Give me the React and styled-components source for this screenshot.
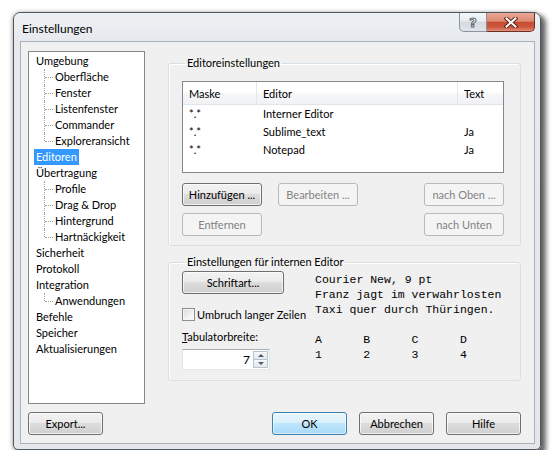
import React from 'react';
import styled, { createGlobalStyle, css } from 'styled-components';

const GlobalStyle = createGlobalStyle`
  html, body { margin: 0; padding: 0; background: #ffffff; }
  body {
    font-family: Lato, "Liberation Sans", sans-serif;
    font-size: 11px;
    color: #000;
  }
  * { box-sizing: border-box; }
`;

const Desk = styled.div`
  padding: 12px 0 0 13px;
`;

const Window = styled.div`
  width: 528px;
  height: 438px;
  display: flex;
  flex-direction: column;
  padding: 0 5px 5px 6px;
  border: 1px solid #4e565e;
  border-radius: 7px 7px 5px 5px;
  background: linear-gradient(#eef1f4, #e6eaee 28px, #e3e7eb);
  box-shadow: 4px 4px 5px 1px rgba(0, 0, 0, 0.6), -1px 0 4px rgba(0, 0, 0, 0.25);
`;

const TitleBar = styled.div`
  height: 28px;
  display: flex;
  align-items: center;
  padding-left: 2px;
`;

const Title = styled.span`
  font-size: 12px;
  padding-top: 2px;
  color: #000;
`;

const CaptionGroup = styled.div`
  display: flex;
  align-self: flex-start;
  margin-left: auto;
`;

const CaptionButton = styled.div`
  width: ${(p) => p.$w}px;
  height: 19px;
  display: flex;
  align-items: center;
  justify-content: center;
  border: 1px solid #8a949e;
  border-top: none;
  ${(p) =>
    p.$close
      ? css`
          border-color: #6f3024;
          border-left: none;
          border-radius: 0 0 5px 0;
          background: linear-gradient(#eaa898 0%, #dd8a76 45%, #c74d32 52%, #cc5a40 80%, #e2937d 100%);
        `
      : css`
          border-radius: 0 0 0 5px;
          background: linear-gradient(#f5f7f9 0%, #e8ecf0 45%, #d4dae0 52%, #dfe4e9 100%);
        `}
`;

const HelpGlyph = styled.span`
  font-family: "DejaVu Sans", sans-serif;
  font-size: 13px;
  font-weight: bold;
  color: #f4f6f8;
  -webkit-text-stroke: 1px #5e6874;
  line-height: 1;
`;

const Client = styled.div`
  flex: 1;
  display: grid;
  grid-template-columns: 117px 353px;
  grid-template-rows: 1fr auto;
  column-gap: 23px;
  row-gap: 8px;
  padding: 9px 13px 8px 7px;
  border: 1px solid #a9b1b9;
  background: #f0f0f0;
`;

/* ---------- navigation tree ---------- */

const Tree = styled.div`
  border: 1px solid #828790;
  background: #fff;
  padding-top: 1px;
`;

const TreeRow = styled.div`
  position: relative;
  height: 16px;
  line-height: 16px;
  white-space: nowrap;
  padding-left: ${(p) => (p.$level ? 26 : 7)}px;

  ${(p) =>
    p.$level > 0 &&
    css`
      &::before {
        content: '';
        position: absolute;
        left: 15px;
        top: 0;
        height: ${p.$last ? 8 : 16}px;
        border-left: 1px dotted #a0a0a0;
      }
      &::after {
        content: '';
        position: absolute;
        left: 16px;
        top: 8px;
        width: 8px;
        border-top: 1px dotted #a0a0a0;
      }
    `}
`;

const TreeLabel = styled.span`
  display: inline-block;
  padding: 0 2px;
  margin-left: -2px;
  ${(p) =>
    p.$selected &&
    css`
      background: #3399ff;
      color: #fff;
    `}
`;

/* ---------- group boxes ---------- */

const RightColumn = styled.div`
  display: flex;
  flex-direction: column;
  padding-top: 5px;
`;

const GroupBox = styled.fieldset`
  margin: ${(p) => p.$gap || 0}px 0 0 0;
  padding: ${(p) => p.$pt}px 16px ${(p) => p.$pb}px 13px;
  border: 1px solid #d5dfe5;
  border-radius: 3px;
  box-shadow: inset 1px 1px 0 #ffffff;
  min-width: 0;
`;

const Legend = styled.legend`
  margin-left: 3px;
  padding: 0 2px;
  line-height: 14px;
  color: #000;
`;

/* ---------- list view ---------- */

const ListView = styled.div`
  height: 92px;
  border: 1px solid #828790;
  background: #fff;
`;

const ListGrid = styled.div`
  display: grid;
  grid-template-columns: 74px 201px 1fr;
`;

const HeaderRow = styled(ListGrid)`
  height: 23px;
  border-bottom: 1px solid #e2e4e8;
  background: linear-gradient(#ffffff 0%, #ffffff 45%, #f6f7f9 55%, #f1f2f4 100%);
`;

const HeaderCell = styled.div`
  display: flex;
  align-items: center;
  padding-left: 6px;
  border-right: ${(p) => (p.$last ? 'none' : '1px solid #e3e6ea')};
`;

const ListRow = styled(ListGrid)`
  height: 18px;
  line-height: 18px;
`;

const ListCell = styled.div`
  padding-left: 6px;
  white-space: nowrap;
`;

/* ---------- buttons ---------- */

const ButtonRow = styled.div`
  display: flex;
  gap: 16px;
  margin-top: ${(p) => p.$mt}px;
`;

const Button = styled.button`
  width: ${(p) => p.$w || 80}px;
  height: 23px;
  padding: 0;
  font: inherit;
  color: #000;
  border: 1px solid #707070;
  border-radius: 3px;
  background: linear-gradient(#f2f2f2 0%, #ebebeb 45%, #dddddd 50%, #cfcfcf 100%);
  box-shadow: inset 0 0 0 1px rgba(255, 255, 255, 0.7);
  ${(p) => p.$push && css`margin-left: auto;`}
  ${(p) =>
    p.disabled &&
    css`
      color: #838383;
      border-color: #b6babd;
      background: #f4f4f4;
      box-shadow: none;
    `}
  ${(p) =>
    p.$default &&
    css`
      border-color: #3c7fb1;
      background: linear-gradient(#eaf6fd 0%, #d9f0fc 45%, #bee6fd 50%, #a7d9f5 100%);
      box-shadow: inset 0 0 0 1px rgba(255, 255, 255, 0.6);
    `}
`;

/* ---------- internal editor settings ---------- */

const EditorGrid = styled.div`
  display: grid;
  grid-template-columns: 133px auto;
`;

const EditorControls = styled.div`
  display: flex;
  flex-direction: column;
  align-items: flex-start;
`;

const CheckRow = styled.label`
  display: flex;
  align-items: center;
  gap: 2px;
  height: 16px;
  margin-top: 12px;
  white-space: nowrap;
`;

const CheckBox = styled.span`
  width: 13px;
  height: 13px;
  border: 1px solid #8e8f8f;
  background: linear-gradient(135deg, #dcdcdc, #ffffff);
  box-shadow: inset 0 0 0 1px #f4f4f4;
`;

const FieldLabel = styled.div`
  margin-top: 8px;
  line-height: 14px;
`;

const SpinEdit = styled.div`
  margin-top: 5px;
  width: 88px;
  height: 21px;
  display: flex;
  align-items: stretch;
  border: 1px solid #abadb3;
  border-color: #abadb3 #dbdfe6 #e3e9ef #e2e3ea;
  background: #fff;
  padding: 1px;
`;

const SpinValue = styled.div`
  flex: 1;
  display: flex;
  align-items: center;
  justify-content: flex-end;
  padding-right: 3px;
  font-size: 12px;
`;

const SpinButtons = styled.div`
  width: 15px;
  display: flex;
  flex-direction: column;
`;

const SpinHalf = styled.div`
  flex: 1;
  display: flex;
  align-items: center;
  justify-content: center;
  border: 1px solid #b7c3cf;
  ${(p) => p.$down && css`border-top: none;`}
  background: linear-gradient(#f6f8fa, #e3e8ee);
`;

const Arrow = styled.span`
  width: 0;
  height: 0;
  border-left: 3px solid transparent;
  border-right: 3px solid transparent;
  ${(p) =>
    p.$down
      ? css`border-top: 3px solid #4a5866;`
      : css`border-bottom: 3px solid #4a5866;`}
`;

const Preview = styled.pre`
  margin: 0;
  padding-top: 1px;
  font-family: "Liberation Mono", "Courier New", monospace;
  font-size: 11.5px;
  line-height: 15px;
  color: #000;
`;

const Footer = styled.div`
  grid-column: 1 / -1;
  display: flex;
  gap: 12px;
`;

const treeData = [
  { label: 'Umgebung', children: ['Oberfläche', 'Fenster', 'Listenfenster', 'Commander', 'Exploreransicht'] },
  { label: 'Editoren', selected: true },
  { label: 'Übertragung', children: ['Profile', 'Drag & Drop', 'Hintergrund', 'Hartnäckigkeit'] },
  { label: 'Sicherheit' },
  { label: 'Protokoll' },
  { label: 'Integration', children: ['Anwendungen'] },
  { label: 'Befehle' },
  { label: 'Speicher' },
  { label: 'Aktualisierungen' },
];

const treeRows = treeData.flatMap((node) => [
  { label: node.label, level: 0, selected: node.selected },
  ...(node.children || []).map((c, i, arr) => ({ label: c, level: 1, last: i === arr.length - 1 })),
]);

const editors = [
  { mask: '*.*', editor: 'Interner Editor', text: '' },
  { mask: '*.*', editor: 'Sublime_text', text: 'Ja' },
  { mask: '*.*', editor: 'Notepad', text: 'Ja' },
];

const previewText = [
  'Courier New, 9 pt',
  'Franz jagt im verwahrlosten',
  'Taxi quer durch Thüringen.',
  '',
  'A      B      C      D',
  '1      2      3      4',
].join('\n');

function CloseGlyph() {
  return (
    <svg width="14" height="11" viewBox="0 0 14 11">
      <path d="M2.5 1.5 L11.5 9.5 M11.5 1.5 L2.5 9.5" stroke="#5a2219" strokeWidth="4" strokeLinecap="square" />
      <path d="M2.5 1.5 L11.5 9.5 M11.5 1.5 L2.5 9.5" stroke="#ffffff" strokeWidth="2" strokeLinecap="square" />
    </svg>
  );
}

export default function App() {
  return (
    <>
      <GlobalStyle />
      <Desk>
        <Window>
          <TitleBar>
            <Title>Einstellungen</Title>
            <CaptionGroup>
              <CaptionButton $w={28}>
                <HelpGlyph>?</HelpGlyph>
              </CaptionButton>
              <CaptionButton $w={48} $close>
                <CloseGlyph />
              </CaptionButton>
            </CaptionGroup>
          </TitleBar>

          <Client>
            <Tree>
              {treeRows.map((r) => (
                <TreeRow key={r.label} $level={r.level} $last={r.last}>
                  <TreeLabel $selected={r.selected}>{r.label}</TreeLabel>
                </TreeRow>
              ))}
            </Tree>

            <RightColumn>
              <GroupBox $pt={11} $pb={9}>
                <Legend>Editoreinstellungen</Legend>
                <ListView>
                  <HeaderRow>
                    <HeaderCell>Maske</HeaderCell>
                    <HeaderCell>Editor</HeaderCell>
                    <HeaderCell $last>Text</HeaderCell>
                  </HeaderRow>
                  {editors.map((e) => (
                    <ListRow key={e.editor}>
                      <ListCell>{e.mask}</ListCell>
                      <ListCell>{e.editor}</ListCell>
                      <ListCell>{e.text}</ListCell>
                    </ListRow>
                  ))}
                </ListView>
                <ButtonRow $mt={10}>
                  <Button>Hinzufügen ...</Button>
                  <Button disabled>Bearbeiten ...</Button>
                  <Button disabled $push>nach Oben ...</Button>
                </ButtonRow>
                <ButtonRow $mt={7}>
                  <Button disabled>Entfernen</Button>
                  <Button disabled $push>nach Unten</Button>
                </ButtonRow>
              </GroupBox>

              <GroupBox $gap={9} $pt={2} $pb={10}>
                <Legend>Einstellungen für internen Editor</Legend>
                <EditorGrid>
                  <EditorControls>
                    <Button $w={102}>Schriftart...</Button>
                    <CheckRow>
                      <CheckBox />
                      Umbruch langer Zeilen
                    </CheckRow>
                    <FieldLabel>
                      <u>T</u>abulatorbreite:
                    </FieldLabel>
                    <SpinEdit>
                      <SpinValue>7</SpinValue>
                      <SpinButtons>
                        <SpinHalf>
                          <Arrow />
                        </SpinHalf>
                        <SpinHalf $down>
                          <Arrow $down />
                        </SpinHalf>
                      </SpinButtons>
                    </SpinEdit>
                  </EditorControls>
                  <Preview>{previewText}</Preview>
                </EditorGrid>
              </GroupBox>
            </RightColumn>

            <Footer>
              <Button $w={75}>Export...</Button>
              <Button $w={75} $default $push>OK</Button>
              <Button $w={75}>Abbrechen</Button>
              <Button $w={75}>Hilfe</Button>
            </Footer>
          </Client>
        </Window>
      </Desk>
    </>
  );
}
